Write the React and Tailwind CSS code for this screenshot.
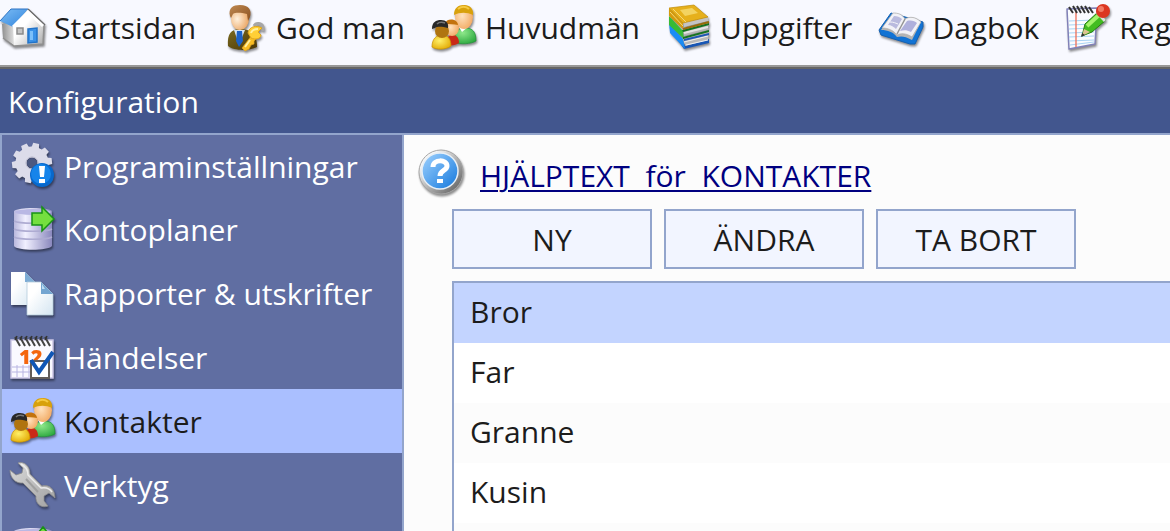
import React, { useState } from 'react';
import clsx from 'clsx';

const Icon = ({ children }) => (
  <svg viewBox="0 0 48 48" className="size-12 shrink-0 overflow-visible drop-shadow-[1px_2px_1px_rgba(0,0,0,0.45)]" aria-hidden="true">
    {children}
  </svg>
);

const HomeIcon = () => (
  <Icon>
    <defs>
      <linearGradient id="roof" x1="0" y1="0" x2="1" y2="1">
        <stop offset="0" stopColor="#7dbdf5" />
        <stop offset="1" stopColor="#2f83dc" />
      </linearGradient>
      <linearGradient id="wall" x1="0" y1="0" x2="1" y2="1">
        <stop offset=".4" stopColor="#ffffff" />
        <stop offset="1" stopColor="#a9a9a9" />
      </linearGradient>
      <linearGradient id="side">
        <stop offset="0" stopColor="#8f8f8f" />
        <stop offset="1" stopColor="#e6e6e6" />
      </linearGradient>
    </defs>
    <path d="M2 20 14 18 15 42 3 34z" fill="url(#side)" />
    <path d="M13 21 28 6 44 22 43 40 14 42z" fill="url(#wall)" />
    <path d="M3 34 14 42 43 40 44 21" fill="none" stroke="#8f8f8f" strokeWidth="1.5" />
    <path d="M28 5 11 5 0 17 13 23z" fill="url(#roof)" />
    <path d="M28 5 11 5 0 17" fill="none" stroke="#2f74c4" />
    <path d="M28 5 45 21" fill="none" stroke="#6a6a6a" strokeWidth="1.5" />
    <path d="M13 23 28 8 43 22" fill="none" stroke="#ffffff" strokeWidth="3" />
    <path d="M17 24h6v6h-6z" fill="#c4c4c4" stroke="#8a8a8a" strokeWidth="1.5" />
    <path d="M28 25 37 24 37 38 28 39z" fill="#3a92e8" stroke="#2273c8" strokeWidth="1.5" />
    <path d="M30 27h3v9h-3z" fill="#7cc0fa" />
  </Icon>
);

const PersonIcon = () => (
  <Icon>
    <defs>
      <radialGradient id="face" cx=".35" cy=".5" r=".7">
        <stop offset="0" stopColor="#fff0dc" />
        <stop offset="1" stopColor="#e99f58" />
      </radialGradient>
      <linearGradient id="suit" x1="0" y1="0" x2="1" y2="1">
        <stop offset="0" stopColor="#7b6a20" />
        <stop offset="1" stopColor="#4a3605" />
      </linearGradient>
      <linearGradient id="hair" x1="0" y1="0" x2="1" y2="1">
        <stop offset="0" stopColor="#c08a52" />
        <stop offset="1" stopColor="#8a5020" />
      </linearGradient>
    </defs>
    <path d="M6 42C5 30 9 25 18 25s17 3 17 18c-8 4-23 4-29-1z" fill="url(#suit)" />
    <path d="M12 26 17 41 23 26z" fill="#d3e2f2" />
    <path d="M15 27h5l1 10-4 6-3-6z" fill="#1c62c8" />
    <ellipse cx="18" cy="15" rx="9" ry="11" fill="url(#face)" />
    <path d="M8 12C6 4 11 1 18 1c9 0 12 5 10 12l-2 4-1-7c-5-1-11-2-14 0l-2 4z" fill="url(#hair)" />
    <path d="M32 22c2-4 8-3 9 1v4" fill="none" stroke="#a7a7a7" strokeWidth="3" />
    <path d="M36 33 30 31 20 44 23 47 27 45 29 41 32 40 32 37z" fill="#f8bd24" stroke="#e0a41c" strokeWidth=".7" />
    <path d="M26 29C27 22 35 21 40 24L36 28 39 31C39 35 33 36 29 34z" fill="#ffcf36" stroke="#dfa41c" />
    <path d="M29 29c1-3 4-4 7-4M28 36 23 43" fill="none" stroke="#fff0a0" strokeWidth="2" />
  </Icon>
);

const PeopleIcon = () => (
  <Icon>
    <defs>
      <radialGradient id="skin" cx=".4" cy=".45" r=".65">
        <stop offset="0" stopColor="#ffe2bd" />
        <stop offset="1" stopColor="#f2a860" />
      </radialGradient>
      <radialGradient id="green" cx=".4" cy=".3" r=".8">
        <stop offset="0" stopColor="#8fe88b" />
        <stop offset="1" stopColor="#25a43a" />
      </radialGradient>
      <radialGradient id="yellow" cx=".4" cy=".4" r=".7">
        <stop offset="0" stopColor="#fff06a" />
        <stop offset="1" stopColor="#e2a800" />
      </radialGradient>
    </defs>
    <path d="M23 38c0-9 3-14 11-14s11 4 11 13c-5 3-16 4-22 1z" fill="url(#green)" stroke="#219238" strokeWidth=".7" />
    <path d="M28 23 31 28 37 23z" fill="#fff" />
    <ellipse cx="33" cy="13" rx="9" ry="12" fill="url(#skin)" />
    <path d="M23 11C23 4 27 1 33 1s10 4 9 10c-6-3-13-3-19 0z" fill="#d8a10c" />
    <path d="M27 5c3-3 8-3 11 0" fill="none" stroke="#f5ca43" strokeWidth="2" />
    <path d="M17 41V33c3-4 11-3 11 6-3 2-7 3-11 2z" fill="#c92a17" />
    <ellipse cx="21" cy="24" rx="7" ry="8" fill="url(#skin)" />
    <path d="M14 20c1-6 12-6 13 1-4-1-9-1-13-1z" fill="#c3730d" />
    <path d="M1 43c0-8 4-12 10-12s9 4 9 11c-5 4-15 4-19 1z" fill="url(#yellow)" stroke="#c89000" strokeWidth=".7" />
    <ellipse cx="11" cy="27" rx="7" ry="7" fill="#b07410" />
    <path d="M1 25c0-7 4-9 9-9s8 3 7 8c-5-1-10-2-13 0z" fill="#282828" />
    <path d="M6 20c2-2 5-2 8-1" fill="none" stroke="#777" strokeWidth="1.5" />
  </Icon>
);

const BooksIcon = () => (
  <Icon>
    <path d="M3 23 18 45 43 39 43 35 18 40z" fill="#1856b4" />
    <path d="M3 19 17 35 19 45 4 29z" fill="#1a8cf5" />
    <path d="M17 33 43 27 42 36 19 42z" fill="#b9b9b9" />
    <path d="M18 38 42 32M20 41 42 36" stroke="#f0f0f0" />
    <path d="M18 35 43 29 43 31 18 37z" fill="#1d57b5" />
    <path d="M3 12 17 27 18 35 3 21z" fill="#38bb35" />
    <path d="M17 24 43 18 42 26 18 32z" fill="#b4b4b4" />
    <path d="M18 29 42 23" stroke="#e4e4e4" strokeWidth="2" />
    <path d="M16 26 43 19 43 21 17 28z" fill="#147321" />
    <path d="M17 33 43 26 43 28 17 35z" fill="#147321" />
    <path d="M17 18 42 13 42 17 18 23z" fill="#c4c4c4" />
    <path d="M3 4 28 1 42 13 17 19z" fill="#e6b01c" stroke="#c08c08" strokeWidth=".7" strokeLinejoin="round" />
    <path d="M3 4 17 19 17 25 3 12z" fill="#d49a0c" />
    <path d="M17 25 43 18" stroke="#966c09" strokeWidth="2" />
    <path d="M14 6 26 4 32 9 19 12z" fill="#f3d362" />
    <path d="M7 5 20 18M4 8 17 22" stroke="#f3d778" />
  </Icon>
);

const DiaryIcon = () => (
  <Icon>
    <path d="M1 26 13 9 45 18 45 23 37 40 32 40 3 31z" fill="#1273d4" stroke="#1560b0" strokeLinejoin="round" />
    <path d="M3 26 14 10c5-1 9 0 13 5 5-3 11-2 16 3L34 36c-7-4-11-4-15-3-4-5-9-7-16-7z" fill="#b4b4b4" />
    <path d="M4 24 15 9c5 0 9 1 12 6 5-3 11-2 16 3L34 33c-6-4-11-4-15-2-4-5-9-7-15-7z" fill="#f2f2f7" stroke="#aaa" strokeWidth=".7" />
    <path d="M10 21 16 12c3 0 6 1 8 3l-6 10c-2-2-5-4-8-4z" fill="#b9bade" />
    <path d="M29 17c4-1 8 0 10 2l-6 9c-4-2-7-2-11-1z" fill="#afb0dc" />
    <path d="M27 15 19 30" stroke="#949494" strokeWidth="1.5" />
    <path d="M12 18c4 0 5 1 8 2" stroke="#f5f5fa" fill="none" />
  </Icon>
);

const NotesIcon = () => (
  <Icon>
    <path d="M2 5 32 4 30 40 4 45z" fill="#fafcff" stroke="#8181b8" strokeWidth="1.5" strokeLinejoin="round" />
    <path d="M4 17 29 16M4 21 29 20M4 25 29 24M4 29 29 28M4 33 29 32M4 37 29 36M5 41 29 38" stroke="#a9d4f4" />
    <path d="M11 8V43" stroke="#ef6e57" strokeWidth="1.3" />
    <path d="M4 3 8 9M8 2 12 9M12 2 16 9M16 2 20 9M20 2 24 9M24 3 28 9" stroke="#333" strokeWidth="2" />
    <path d="M17 32 20 20 33 8 41 16 27 28z" fill="#42bd20" stroke="#267d12" strokeLinejoin="round" />
    <path d="M22 22 34 11" stroke="#a4f36c" strokeWidth="4" />
    <path d="M17 32 19 25 25 28z" fill="#dcc392" />
    <path d="M16 33 17 29 20 31z" fill="#333" />
    <path d="M32 8 40 17" stroke="#dedede" strokeWidth="3" />
    <circle cx="38" cy="7" r="7" fill="#dc3621" />
    <circle cx="36" cy="5" r="3" fill="#f07a64" />
  </Icon>
);

const teeth = [0, 36, 72, 108, 144, 180, 216, 252, 288, 324];

const GearIcon = () => (
  <Icon>
    <g fill="#dcdcea">
      {teeth.map(a => (
        <path key={a} d="M18 7 19 1 25 1 26 7z" transform={`rotate(${a + 12} 22 21)`} />
      ))}
    </g>
    <circle cx="22" cy="21" r="11" fill="none" stroke="#dcdcea" strokeWidth="11" />
    <circle cx="22" cy="21" r="5" fill="#4c5880" />
    <circle cx="22" cy="21" r="6" fill="none" stroke="#b4b4c8" />
    <circle cx="32" cy="33" r="12" fill="#0868cc" />
    <circle cx="31" cy="32" r="10" fill="#1684ea" />
    <path d="M29 24h6l-1 11h-4z" fill="#fff" />
    <path d="M29 37h6v4h-6z" fill="#fff" />
  </Icon>
);

const DatabaseIcon = ({ arrow = 'right' }) => (
  <Icon>
    <defs>
      <linearGradient id="disk">
        <stop offset="0" stopColor="#b9b8dd" />
        <stop offset=".3" stopColor="#f1f0ff" />
        <stop offset="1" stopColor="#8a88bd" />
      </linearGradient>
    </defs>
    <path d="M4 6v35c3 5 34 5 38 0V6C39 2 8 2 4 6z" fill="url(#disk)" />
    <ellipse cx="23" cy="7" rx="18" ry="3" fill="#b9b8e4" />
    <path d="M4 16c5 3 33 3 38 0M4 24c5 3 33 3 38 0M4 32c5 3 33 3 38 0" fill="none" stroke="#aeacd2" strokeWidth="1.5" />
    {arrow === 'right' ? (
      <path d="M22 8H32V2L44 14 32 26V20H22z" fill="#75df3f" stroke="#189315" strokeWidth="1.5" />
    ) : (
      <path d="M29 24V14H23L33 2 43 14H37V24z" fill="#75df3f" stroke="#189315" strokeWidth="1.5" />
    )}
  </Icon>
);

const PagesIcon = () => (
  <Icon>
    <defs>
      <linearGradient id="sheet" x1="0" y1="0" x2="1" y2="1">
        <stop offset=".3" stopColor="#ffffff" />
        <stop offset="1" stopColor="#d4e5f1" />
      </linearGradient>
    </defs>
    <path d="M1 3H15L25 13V36H1z" fill="url(#sheet)" />
    <path d="M15 3V13H25z" fill="#7dacd5" />
    <path d="M17 13H31L43 25V46H17z" fill="url(#sheet)" stroke="#b4cbdc" strokeWidth=".8" />
    <path d="M31 13V25H43z" fill="#73a5d1" />
    <path d="M32 15V20L35 20z" fill="#bddcf3" />
  </Icon>
);

const CalendarIcon = () => (
  <Icon>
    <path d="M1 7H43V45H1z" fill="#faf9ff" stroke="#cbc6e6" strokeWidth="1.5" />
    <path d="M2 34H20M2 39H20M7 32V44M13 32V44M19 32V44" stroke="#b8b5e2" />
    <path d="M5 4 10 13M10 4 15 13M15 4 20 13M20 4 25 13M25 4 30 13M30 4 35 13M35 4 40 13" stroke="#444" strokeWidth="2" fill="none" />
    <path d="M5 7 7 3M10 7 12 3M15 7 17 3M20 7 22 3M25 7 27 3M30 7 32 3M35 7 37 3" stroke="#333" strokeWidth="1.5" />
    <text x="9" y="31" fontSize="20" fontWeight="800" fill="#f4660e" className="font-['Open_Sans',sans-serif]">12</text>
    <path d="M21 28H39V45H21z" fill="#fff" stroke="#625c58" strokeWidth="2" />
    <path d="M21 27 29 39 43 19" fill="none" stroke="#0f56b5" strokeWidth="4" />
  </Icon>
);

const WrenchIcon = () => (
  <Icon>
    <defs>
      <linearGradient id="steel" x1="0" y1="0" x2="1" y2="1">
        <stop offset="0" stopColor="#dadada" />
        <stop offset="1" stopColor="#a2a2a2" />
      </linearGradient>
    </defs>
    <path
      d="M8 2C14 0 20 5 20 13L32 25C39 23 45 28 45 37L39 32 34 35 34 40 38 45C31 48 25 42 26 35L13 22C6 23 0 17 0 9L6 14 12 12 13 7z"
      fill="url(#steel)"
      stroke="#8d8d8d"
      strokeWidth=".8"
      strokeLinejoin="round"
    />
    <path d="M11 3C17 6 18 10 18 14L31 27C36 26 40 28 42 31" fill="none" stroke="#ececec" strokeWidth="1.5" />
    <path d="M16 18 28 31" stroke="#a0a0a0" strokeWidth="2" />
  </Icon>
);

const HelpIcon = () => (
  <Icon>
    <defs>
      <linearGradient id="rim" x1="0" y1="0" x2="1" y2="1">
        <stop offset=".2" stopColor="#f6f6f6" />
        <stop offset=".85" stopColor="#707070" />
      </linearGradient>
      <linearGradient id="glass" x1="0" y1="0" x2="1" y2="1">
        <stop offset="0" stopColor="#a1d3ff" />
        <stop offset="1" stopColor="#1277dc" />
      </linearGradient>
    </defs>
    <circle cx="23" cy="23" r="22" fill="url(#rim)" stroke="#a5a5a5" />
    <circle cx="22" cy="22" r="18" fill="url(#glass)" stroke="#e7eff6" strokeWidth="1.5" />
    <path d="M15 18C15 10 29 10 29 17 29 22 22 21 22 27" fill="none" stroke="#fff" strokeWidth="5" />
    <path d="M19 30h6v4h-6z" fill="#fff" />
  </Icon>
);

const toolbar = [
  { label: 'Startsidan', icon: HomeIcon },
  { label: 'God man', icon: PersonIcon },
  { label: 'Huvudmän', icon: PeopleIcon },
  { label: 'Uppgifter', icon: BooksIcon },
  { label: 'Dagbok', icon: DiaryIcon },
  { label: 'Reg', icon: NotesIcon },
];

const sections = [
  { label: 'Programinställningar', icon: GearIcon },
  { label: 'Kontoplaner', icon: DatabaseIcon },
  { label: 'Rapporter & utskrifter', icon: PagesIcon },
  { label: 'Händelser', icon: CalendarIcon },
  { label: 'Kontakter', icon: PeopleIcon },
  { label: 'Verktyg', icon: WrenchIcon },
];

const contacts = ['Bror', 'Far', 'Granne', 'Kusin'];

const App = () => {
  const [section, setSection] = useState('Kontakter');
  const [contact, setContact] = useState('Bror');

  return (
    <div className="flex h-screen flex-col overflow-hidden bg-[#fcfcfc] font-['Open_Sans','Noto_Sans',sans-serif] text-3xl leading-10 text-[#1c1c1c]">
      <nav className="shrink-0 overflow-hidden border-b-2 border-[#666] bg-[#f8f9ff]">
        <div className="flex h-[67px] gap-[26px] border-b-2 border-[#999] pt-1">
          {toolbar.map(({ label, icon: ItemIcon }) => (
            <button key={label} type="button" className="flex h-12 shrink-0 items-center gap-1.5 whitespace-nowrap">
              <ItemIcon />
              {label}
            </button>
          ))}
        </div>
      </nav>
      <h1 className="flex h-16 shrink-0 items-center bg-[#42568e] px-2 pt-0.5 text-white">Konfiguration</h1>
      <div className="flex min-h-0 flex-1 border-t-2 border-[#93a5cc]">
        <ul className="w-101 shrink-0 border-x-2 border-[#93a5cc] bg-[#606ea2] text-white">
          {sections.map(({ label, icon: ItemIcon }) => (
            <li key={label} className="h-16 first:h-[62px]">
              <button
                type="button"
                onClick={() => setSection(label)}
                className={clsx(
                  'flex h-full w-full items-center gap-1.5 whitespace-nowrap pl-2',
                  section === label && 'bg-[#aabfff] text-[#1c1c1c]'
                )}
              >
                <ItemIcon />
                <span className="pt-0.5">{label}</span>
              </button>
            </li>
          ))}
          <li className="flex h-16 items-center pl-2">
            <DatabaseIcon arrow="up" />
          </li>
        </ul>
        <main className="min-w-0 flex-1 pt-3.5">
          <div className="flex h-12 items-center gap-3.5 pl-3.5">
            <HelpIcon />
            <a href="#hjalp" className="whitespace-pre pt-1.5 text-[#000080] underline decoration-2 underline-offset-3">
              HJÄLPTEXT  för  KONTAKTER
            </a>
          </div>
          <div className="mt-3 flex gap-3 pl-12">
            {['NY', 'ÄNDRA', 'TA BORT'].map(label => (
              <button key={label} type="button" className="h-15 w-50 border-2 border-[#93a5cc] bg-[#f2f5ff] pt-0.5">
                {label}
              </button>
            ))}
          </div>
          <ul className="ml-12 mt-3 border-l-2 border-t-2 border-[#93a5cc] bg-white">
            {contacts.map(name => (
              <li key={name} className="even:bg-white odd:bg-[#fcfcfc]">
                <button
                  type="button"
                  onClick={() => setContact(name)}
                  className={clsx('block h-15 w-full px-4 pb-0.5 text-left', contact === name && 'bg-[#c3d4ff]')}
                >
                  {name}
                </button>
              </li>
            ))}
            <li className="h-15 bg-[#fcfcfc]" />
          </ul>
        </main>
      </div>
    </div>
  );
};

export default App;
